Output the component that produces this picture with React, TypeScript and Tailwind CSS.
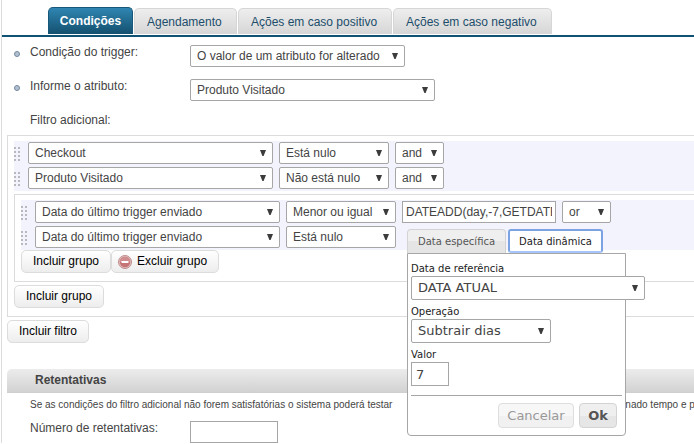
import type { ReactNode } from "react";

function Arrow() {
  return (
    <svg
      aria-hidden="true"
      viewBox="0 0 6 6"
      className="pointer-events-none absolute top-1/2 right-[7px] h-[6px] w-[6px] -translate-y-1/2 fill-[#3c3c3c]"
    >
      <path d="M0 0h6L3.600 6H2.400z" />
    </svg>
  );
}

type SelectProps = {
  id?: string;
  label?: string;
  width: string;
  options: string[];
  large?: boolean;
};

function Select({ id, label, width, options, large }: SelectProps) {
  return (
    <span className={`relative block shrink-0 ${width}`}>
      <select
        id={id}
        aria-label={label}
        className={`block w-full appearance-none rounded-[2px] border border-[#a6a6a6] bg-white pl-[6px] text-[#444] outline-none ${
          large ? "h-6 text-[13px]" : "h-[22px] text-[12px]"
        }`}
      >
        {options.map((o) => (
          <option key={o}>{o}</option>
        ))}
      </select>
      <Arrow />
    </span>
  );
}

function Handle() {
  return (
    <svg
      aria-hidden="true"
      viewBox="0 0 6 14"
      className="mt-[5px] mr-2 h-[14px] w-[6px] shrink-0 fill-[#b9b9bd]"
    >
      {[0, 4, 8, 12].map((y) => (
        <g key={y}>
          <rect x="0" y={y} width="2" height="2" />
          <rect x="4" y={y} width="2" height="2" />
        </g>
      ))}
    </svg>
  );
}

function FilterRow({ children }: { children: ReactNode }) {
  return (
    <div className="flex items-start bg-[#f3f3fd] pt-px pb-[2px]">
      <Handle />
      <div className="flex gap-[6px]">{children}</div>
    </div>
  );
}

function SoftButton({ children }: { children: ReactNode }) {
  return (
    <button
      type="button"
      className="flex h-[23px] items-center rounded-[5px] border border-[#dcdcdc] bg-linear-to-b from-white to-[#ededed] px-[11px] pb-[2px] text-[12px] text-black"
    >
      {children}
    </button>
  );
}

function MinusIcon() {
  return (
    <svg aria-hidden="true" viewBox="0 0 14 14" className="mt-[2px] mr-[5px] -ml-[5px] h-[14px] w-[14px]">
      <circle cx="7" cy="7" r="6.5" fill="#dfbfbf" stroke="#c08c8c" />
      <circle cx="7" cy="7" r="5.2" fill="#c67476" />
      <path d="M1.8 7a5.2 5.2 0 0 1 10.4 0z" fill="#d08c8e" />
      <rect x="3.500" y="6" width="7" height="2" rx="0.400" fill="#fff" />
    </svg>
  );
}

function Bullet() {
  return (
    <svg aria-hidden="true" viewBox="0 0 6 6" className="mt-1 ml-3 h-[6px] w-[6px] shrink-0">
      <circle cx="3" cy="3" r="2.500" fill="#b3c1d1" stroke="#7388a0" />
    </svg>
  );
}

function FieldRow({ id, label, children }: { id: string; label: string; children: ReactNode }) {
  return (
    <div className="flex h-[34px] items-start">
      <div className="flex h-[14px] w-[188px] shrink-0 items-center">
        <Bullet />
        <label htmlFor={id} className="ml-[10px]">
          {label}
        </label>
      </div>
      {children}
    </div>
  );
}

const tabs = [
  { label: "Agendamento", width: "w-[103px]" },
  { label: "Ações em caso positivo", width: "w-[154px]" },
  { label: "Ações em caso negativo", width: "w-[159px]" },
];

function DatePopup() {
  return (
    <div
      role="dialog"
      aria-label="Data"
      className="absolute top-7 left-[5px] z-10 w-[219px] font-['DejaVu_Sans',Verdana,sans-serif] text-[10px] text-[#222]"
    >
      <div role="tablist" className="flex gap-[2px]">
        <button
          type="button"
          role="tab"
          aria-selected="false"
          className="h-6 w-[99px] rounded-t-[4px] border border-b-0 border-[#d3d3d3] bg-linear-to-b from-[#efefef] from-50% to-[#e5e5e5] to-50% text-[#555]"
        >
          Data específica
        </button>
        <button
          type="button"
          role="tab"
          aria-selected="true"
          className="h-6 w-[95px] rounded-[3px] border-2 border-[#7ba3e2] border-b-[#a5c5fb] bg-white pt-px"
        >
          Data dinâmica
        </button>
      </div>
      <div className="rounded-b-[4px] border border-[#a6a6a6] bg-white px-[3px] pb-[7px]">
        <label htmlFor="referencia" className="block pt-[9px] pb-px leading-3">
          Data de referência
        </label>
        <Select id="referencia" width="w-[234px]" options={["DATA ATUAL"]} large />
        <label htmlFor="operacao" className="block pt-[6px] pb-px leading-3">
          Operação
        </label>
        <Select id="operacao" width="w-[140px]" options={["Subtrair dias", "Somar dias"]} large />
        <label htmlFor="valor" className="block pt-[6px] pb-px leading-3">
          Valor
        </label>
        <input
          id="valor"
          defaultValue="7"
          className="block h-6 w-[38px] border border-[#a6a6a6] bg-white px-1 text-[13px] text-[#444] outline-none"
        />
        <div className="mt-[9px] flex justify-end gap-[5px] border-t border-[#a6a6a6] pt-[7px] pr-[5px] text-[13px]">
          <button
            type="button"
            className="h-[25px] w-[76px] rounded-[4px] border border-[#dedede] bg-linear-to-b from-[#f7f7f7] from-50% to-[#f1f1f1] to-50% text-[#999]"
          >
            Cancelar
          </button>
          <button
            type="button"
            className="h-[25px] w-[38px] rounded-[4px] border border-[#d3d3d3] bg-linear-to-b from-[#efefef] from-50% to-[#e6e6e6] to-50% font-bold text-[#555]"
          >
            Ok
          </button>
        </div>
      </div>
    </div>
  );
}

export default function App() {
  return (
    <div className="ml-px overflow-x-clip border-l border-[#dcdcdc] bg-white font-['Liberation_Sans',Arial,sans-serif] text-[12px] leading-4 text-[#444]">
      <div
        role="tablist"
        className="flex items-end gap-px border-b-2 border-[#0f5274] pt-[7px] pb-px pl-[46px]"
      >
        <button
          type="button"
          role="tab"
          aria-selected="true"
          className="h-[27px] w-[85px] rounded-t-[5px] border border-b-0 border-[#17587a] bg-linear-to-b from-[#2f86b2] to-[#14506f] font-bold text-white"
        >
          Condições
        </button>
        {tabs.map((t) => (
          <button
            key={t.label}
            type="button"
            role="tab"
            aria-selected="false"
            className={`h-[26px] rounded-t-[5px] border border-b-0 border-[#d6d6d6] bg-linear-to-b from-[#eeeeee] to-[#d6d6d6] pl-3 text-left text-[#1b4d6b] ${t.width}`}
          >
            {t.label}
          </button>
        ))}
      </div>

      <div className="pt-2">
        <FieldRow id="condicao" label="Condição do trigger:">
          <Select id="condicao" width="w-[215px]" options={["O valor de um atributo for alterado"]} />
        </FieldRow>
        <FieldRow id="atributo" label="Informe o atributo:">
          <Select id="atributo" width="w-[245px]" options={["Produto Visitado", "Checkout"]} />
        </FieldRow>
        <p className="pb-2 pl-7 leading-[14px]">Filtro adicional:</p>
      </div>

      <div className="pl-[5px]">
        <div className="border border-r-0 border-[#dcdcdc] pt-[5px] pb-2 pl-[6px]">
          <FilterRow>
            <Select label="Atributo" width="w-[245px]" options={["Checkout", "Produto Visitado"]} />
            <Select label="Operador" width="w-[110px]" options={["Está nulo", "Não está nulo"]} />
            <Select label="Conector" width="w-[49px]" options={["and", "or"]} />
          </FilterRow>
          <FilterRow>
            <Select label="Atributo" width="w-[245px]" options={["Produto Visitado", "Checkout"]} />
            <Select label="Operador" width="w-[110px]" options={["Não está nulo", "Está nulo"]} />
            <Select label="Conector" width="w-[49px]" options={["and", "or"]} />
          </FilterRow>

          <div className="mt-[3px] mb-[3px] border border-r-0 border-[#dcdcdc] pt-[5px] pb-2 pl-[6px]">
            <FilterRow>
              <Select label="Atributo" width="w-[245px]" options={["Data do último trigger enviado"]} />
              <Select label="Operador" width="w-[110px]" options={["Menor ou igual", "Está nulo"]} />
              <div className="relative w-[154px]">
                <input
                  aria-label="Valor da data"
                  defaultValue="DATEADD(day,-7,GETDATE())"
                  className="block h-[22px] w-full border border-[#a6a6a6] bg-white px-[3px] text-[12px] text-[#444] outline-none"
                />
                <DatePopup />
              </div>
              <Select label="Conector" width="w-[49px]" options={["or", "and"]} />
            </FilterRow>
            <FilterRow>
              <Select label="Atributo" width="w-[245px]" options={["Data do último trigger enviado"]} />
              <Select label="Operador" width="w-[110px]" options={["Está nulo", "Menor ou igual"]} />
            </FilterRow>
            <div className="flex">
              <SoftButton>Incluir grupo</SoftButton>
              <SoftButton>
                <MinusIcon />
                Excluir grupo
              </SoftButton>
            </div>
          </div>

          <SoftButton>Incluir grupo</SoftButton>
        </div>
        <div className="pt-[3px]">
          <SoftButton>Incluir filtro</SoftButton>
        </div>

        <h2 className="mt-[26px] h-6 rounded-tl-[5px] border-b border-[#cfcfcf] bg-linear-to-b from-[#ececec] to-[#d2d2d2] pl-7 leading-[23px] font-bold">
          Retentativas
        </h2>
        <p className="flex overflow-hidden pt-1 pl-[23px] text-[10px] whitespace-nowrap">
          <span className="w-[562px] shrink-0">
            Se as condições do filtro adicional não forem satisfatórias o sistema poderá testar
          </span>
          <span>determinado tempo e p</span>
        </p>
        <div className="flex items-start pt-2">
          <label htmlFor="retentativas" className="w-[183px] shrink-0 pl-[23px] leading-[14px]">
            Número de retentativas:
          </label>
          <input
            id="retentativas"
            className="block h-[22px] w-[88px] border border-[#a6a6a6] bg-white px-1 outline-none"
          />
        </div>
      </div>
    </div>
  );
}
